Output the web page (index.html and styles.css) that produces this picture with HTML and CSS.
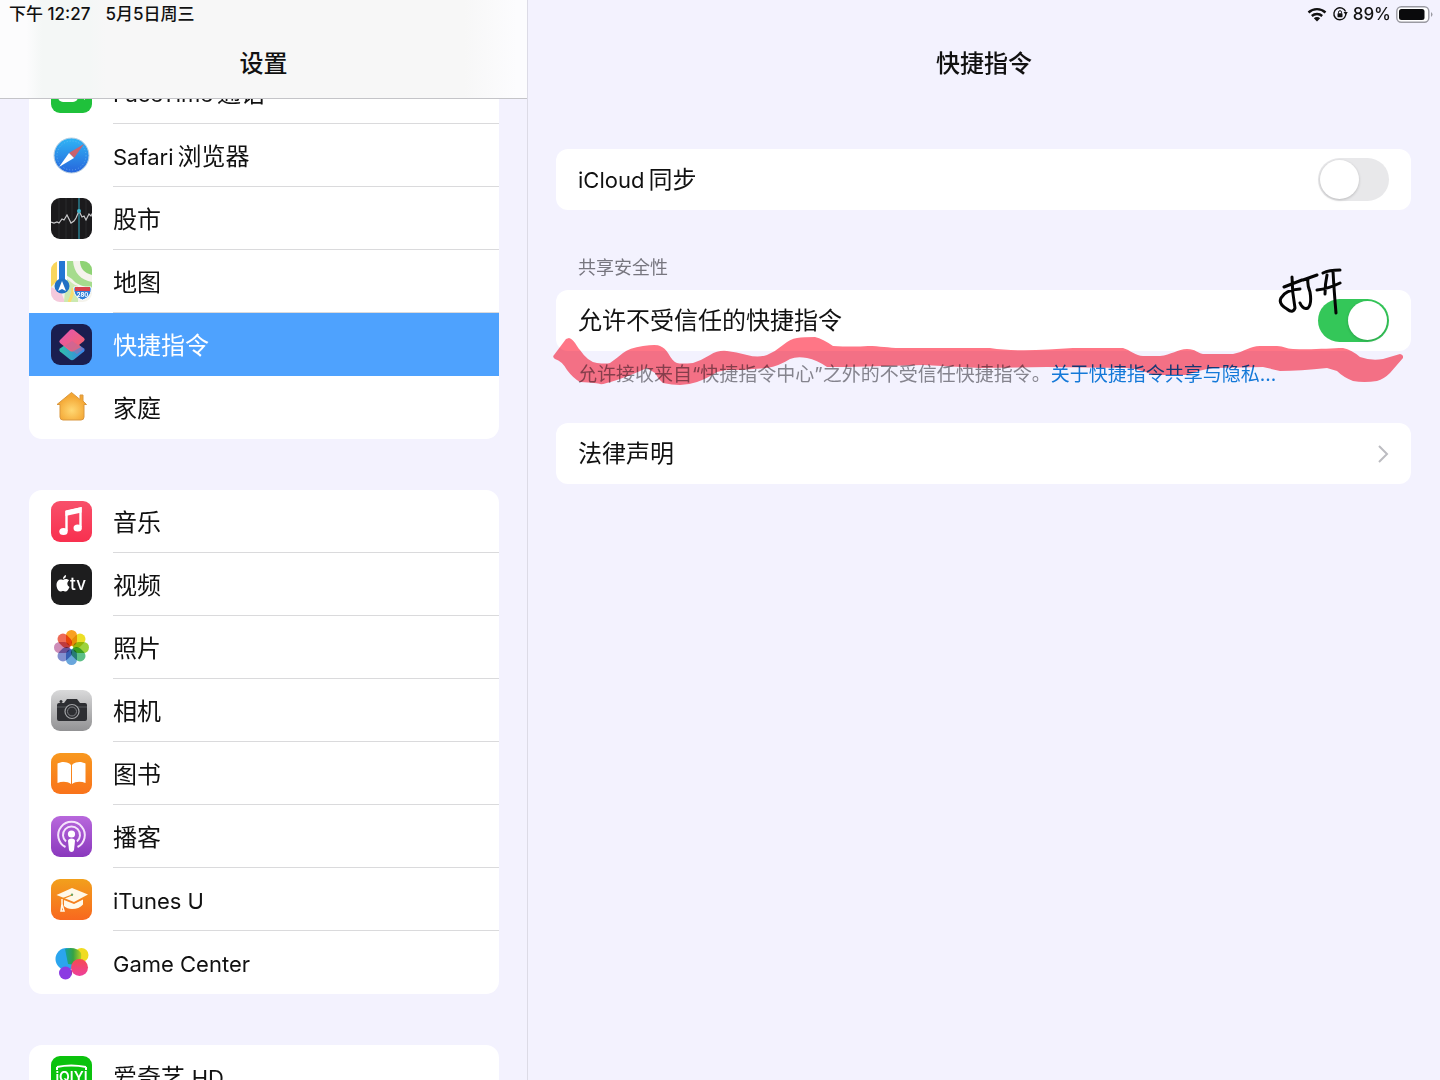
FILE: index.html
```html
<!DOCTYPE html>
<html lang="zh-CN">
<head>
    <meta charset="UTF-8">
    <meta name="viewport" content="width=device-width, initial-scale=1.0">
    <title>设置</title>
    <link rel="stylesheet" href="styles.css">
</head>
<body>

    <div class="app">
        <aside class="sidebar">
            <header class="sidebar-header">
                <div class="status">
                    <span>下午 12:27</span>
                    <span>5月5日周三</span>
                </div>
                <h1>设置</h1>
            </header>

            <nav class="menu">
                <div class="menu-group">
                    <a class="item" href="#facetime">
                        <svg class="icon" viewBox="0 0 41 41">
                            <rect width="41" height="41" rx="9" fill="#1fc13b"/>
                            <rect x="7" y="11" width="20" height="19" rx="5" fill="#fff"/>
                            <path d="M28 18l6-5v15l-6-5z" fill="#fff"/>
                        </svg>
                        <span class="name"><span class="latin">FaceTime</span>通话</span>
                    </a>
                    <a class="item" href="#safari">
                        <svg class="icon" viewBox="0 0 41 41">
                            <defs>
                                <linearGradient id="safari" x2="0" y2="1"><stop stop-color="#2fb5f5"/><stop offset="1" stop-color="#2765dc"/></linearGradient>
                            </defs>
                            <circle cx="20.500" cy="20.500" r="17.500" fill="url(#safari)" stroke="#b9cfe2"/>
                            <circle cx="20.500" cy="20.500" r="14.500" fill="none" stroke="#7fc4f5" stroke-width="1" stroke-dasharray="1 2" opacity=".6"/>
                            <path d="M33 9L18 18l5 5z" fill="#c9626f"/>
                            <path d="M8 32l10-14 5 5z" fill="#fff"/>
                        </svg>
                        <span class="name"><span class="latin">Safari</span>浏览器</span>
                    </a>
                    <a class="item" href="#stocks">
                        <svg class="icon" viewBox="0 0 41 41">
                            <rect width="41" height="41" rx="9" fill="#1b1a1c"/>
                            <path d="M8 1v39M15 0v41M21 0v41M35 1v39" stroke="#2b2a2d"/>
                            <path d="M28 0v41" stroke="#2b7c8c" stroke-width="1.500"/>
                            <path d="M0 24l3 1 3-1 2 1 3-4 2 1 3-5 4 8 3-2 2-3 3-7 3 6 2-1 2 4 3-6 2 2 2-4" fill="none" stroke="#c9c9cb" stroke-width="1.200"/>
                            <circle cx="28" cy="13" r="2" fill="#3fb6cf"/>
                        </svg>
                        <span class="name">股市</span>
                    </a>
                    <a class="item" href="#maps">
                        <svg class="icon" viewBox="0 0 41 41">
                            <defs><clipPath id="tile"><rect width="41" height="41" rx="9"/></clipPath></defs>
                            <g clip-path="url(#tile)">
                                <rect width="41" height="41" fill="#f5f3ec"/>
                                <path d="M0 0h6v20L0 26z" fill="#f9d65c"/>
                                <path d="M0 26l10 5 4 10H0z" fill="#f5c9dc"/>
                                <path d="M15 0h7c1 12 8 19 19 21v6c-9-1-16-4-20-9l-6-4z" fill="#a6dc8d"/>
                                <path d="M15 17c5 4 8 7 12 8v16H13z" fill="#cbe9b1"/>
                                <path d="M29 0h12v14C33 12 29 7 29 0z" fill="#8fd375"/>
                                <path d="M18 41c3-6 4-9 4-14" stroke="#f8dc70" stroke-width="3" fill="none"/>
                                <path d="M11 0v20" stroke="#fff" stroke-width="10"/>
                                <path d="M11 0v20" stroke="#2477d4" stroke-width="6"/>
                                <circle cx="11" cy="25" r="7.500" fill="#2171c4"/>
                                <path d="M11 20l4 10-4-2-4 2z" fill="#fff"/>
                                <path d="M23 26h17c1 6-2 11-8.500 13C25 37 22 32 23 26z" fill="#2f7ed8" stroke="#fff"/>
                                <path d="M24 26h15v4H24z" fill="#d8424d"/>
                                <text x="31.500" y="36" class="shield">280</text>
                            </g>
                        </svg>
                        <span class="name">地图</span>
                    </a>
                    <a class="item active" href="#shortcuts" aria-current="page">
                        <svg class="icon" viewBox="0 0 41 41">
                            <defs>
                                <linearGradient id="layer-top" x2="1" y2="1"><stop stop-color="#e553b8"/><stop offset="1" stop-color="#f4685f"/></linearGradient>
                                <linearGradient id="layer-bottom" x2="1" y2="0"><stop stop-color="#2fc2a8"/><stop offset="1" stop-color="#3a82ea"/></linearGradient>
                            </defs>
                            <rect width="41" height="41" rx="9" fill="#1a1e4f"/>
                            <path d="M19 17.500q2-1 4 0l10 7q1.500 1.500 0 3l-10 8q-2 1.500-4 0l-10-8q-1.500-1.500 0-3z" fill="url(#layer-bottom)"/>
                            <path d="M19 6q2-1.500 4 0l10 8q1.500 1.500 0 3l-5 4 2 2-7 4q-2 1-4 0l-10-8q-1.500-1.500 0-3z" fill="url(#layer-top)"/>
                            <path d="M14 22l7-5 12 8-7 5z" fill="#b56b9f" opacity=".5"/>
                        </svg>
                        <span class="name">快捷指令</span>
                    </a>
                    <a class="item" href="#home">
                        <svg class="icon" viewBox="0 0 41 41">
                            <defs>
                                <radialGradient id="home" cy=".65"><stop stop-color="#ffd873"/><stop offset="1" stop-color="#f4a734"/></radialGradient>
                            </defs>
                            <path d="M20.500 5.500L6 17.500h3V30q0 3 3 3h18q3 0 3-3V17.500h2.500L32 14V8h-3v4.500z" fill="url(#home)" stroke="#d99840" stroke-linejoin="round"/>
                        </svg>
                        <span class="name">家庭</span>
                    </a>
                </div>

                <div class="menu-group">
                    <a class="item" href="#music">
                        <svg class="icon" viewBox="0 0 41 41">
                            <defs>
                                <linearGradient id="music" x2="0" y2="1"><stop stop-color="#f8506a"/><stop offset="1" stop-color="#f8304f"/></linearGradient>
                            </defs>
                            <rect width="41" height="41" rx="9" fill="url(#music)"/>
                            <path d="M15.500 30V11l14-3.500V26" fill="none" stroke="#fff" stroke-width="2.400"/>
                            <path d="M14.500 9.500L30.600 6v5.500L14.500 15z" fill="#fff"/>
                            <ellipse cx="12.500" cy="30.500" rx="4.200" ry="3.500" fill="#fff"/>
                            <ellipse cx="26.700" cy="27" rx="4.200" ry="3.500" fill="#fff"/>
                        </svg>
                        <span class="name">音乐</span>
                    </a>
                    <a class="item" href="#tv">
                        <svg class="icon" viewBox="0 0 41 41">
                            <rect width="41" height="41" rx="9" fill="#1d1d1e"/>
                            <path d="M12 16c1.500-1.500 5-1.500 6 .5-2.500 2-2 5 .5 6.500-1 2.500-2.500 4.500-4 4.500-1 0-1.500-.5-2.500-.5s-1.500.5-2.500.5c-2 0-4-3.500-4-6.500 0-4.500 3.500-6.500 6.500-5z" fill="#fff"/>
                            <path d="M12 15c0-2 1.200-3.500 3-4 .2 2-1 3.800-3 4z" fill="#fff"/>
                            <text x="19" y="26" class="tv">tv</text>
                        </svg>
                        <span class="name">视频</span>
                    </a>
                    <a class="item" href="#photos">
                        <svg class="icon" viewBox="0 0 41 41">
                            <g class="petals">
                                <rect x="15" y="3" width="11" height="16" rx="5.500" fill="#f9a11f"/>
                                <rect x="15" y="3" width="11" height="16" rx="5.500" fill="#ecdf26" transform="rotate(45 20.500 20.500)"/>
                                <rect x="15" y="3" width="11" height="16" rx="5.500" fill="#9dd33c" transform="rotate(90 20.500 20.500)"/>
                                <rect x="15" y="3" width="11" height="16" rx="5.500" fill="#5cbf87" transform="rotate(135 20.500 20.500)"/>
                                <rect x="15" y="3" width="11" height="16" rx="5.500" fill="#69a6dc" transform="rotate(180 20.500 20.500)"/>
                                <rect x="15" y="3" width="11" height="16" rx="5.500" fill="#8290d0" transform="rotate(225 20.500 20.500)"/>
                                <rect x="15" y="3" width="11" height="16" rx="5.500" fill="#cd8db8" transform="rotate(270 20.500 20.500)"/>
                                <rect x="15" y="3" width="11" height="16" rx="5.500" fill="#ee6a56" transform="rotate(315 20.500 20.500)"/>
                            </g>
                        </svg>
                        <span class="name">照片</span>
                    </a>
                    <a class="item" href="#camera">
                        <svg class="icon" viewBox="0 0 41 41">
                            <defs>
                                <linearGradient id="camera" x2="0" y2="1"><stop stop-color="#d9d9da"/><stop offset="1" stop-color="#929294"/></linearGradient>
                            </defs>
                            <rect width="41" height="41" rx="9" fill="url(#camera)"/>
                            <path d="M8 13h5l3-4h10l3 4h5q2 0 2 2v14q0 2-2 2H8q-2 0-2-2V15q0-2 2-2z" fill="#2d2e32"/>
                            <path d="M6 17h30" stroke="#57585c"/>
                            <circle cx="21" cy="21.500" r="7" fill="#2d2e32" stroke="#a4a5a8" stroke-width="1.200"/>
                            <circle cx="21" cy="21.500" r="4.500" fill="none" stroke="#808186"/>
                            <circle cx="10" cy="11.500" r="1.500" fill="#2d2e32"/>
                        </svg>
                        <span class="name">相机</span>
                    </a>
                    <a class="item" href="#books">
                        <svg class="icon" viewBox="0 0 41 41">
                            <defs>
                                <linearGradient id="books" x2="0" y2="1"><stop stop-color="#f8981f"/><stop offset="1" stop-color="#f9731b"/></linearGradient>
                            </defs>
                            <rect width="41" height="41" rx="9" fill="url(#books)"/>
                            <path d="M20 12c-3-3.500-9-4-13.500-1.500V30c4.500-2 10-1.800 13.500 1z" fill="#fff"/>
                            <path d="M21 12c3-3.500 9-4 13.500-1.500V30c-4.500-2-10-1.800-13.500 1z" fill="#fff"/>
                        </svg>
                        <span class="name">图书</span>
                    </a>
                    <a class="item" href="#podcasts">
                        <svg class="icon" viewBox="0 0 41 41">
                            <defs>
                                <linearGradient id="podcasts" x2="0" y2="1"><stop stop-color="#b868dc"/><stop offset="1" stop-color="#8a38bd"/></linearGradient>
                            </defs>
                            <rect width="41" height="41" rx="9" fill="url(#podcasts)"/>
                            <g fill="none" stroke="#f5e3fb" stroke-width="2">
                                <path d="M14.500 31a13.300 13.300 0 1 1 12 0"/>
                                <path d="M15 25.500a8.500 8.500 0 1 1 11 0"/>
                            </g>
                            <circle cx="20.500" cy="18" r="3.600" fill="#fff"/>
                            <path d="M17 25q0-2.500 3.500-2.500T24 25l-1 9q-.5 2-2.500 2T18 34z" fill="#fff"/>
                        </svg>
                        <span class="name">播客</span>
                    </a>
                    <a class="item" href="#itunes-u">
                        <svg class="icon" viewBox="0 0 41 41">
                            <defs>
                                <linearGradient id="itunes" x2="0" y2="1"><stop stop-color="#f2a01c"/><stop offset="1" stop-color="#f8681f"/></linearGradient>
                            </defs>
                            <rect width="41" height="41" rx="9" fill="url(#itunes)"/>
                            <path d="M21 9l16 6.500-14 7.500L5.500 16z" fill="#fff8e8"/>
                            <path d="M13 21l10 4 9-4.500v5q-4 4.500-11 4.500-5 0-8-3z" fill="#fff8e8"/>
                            <path d="M21 16l-10 4v6" fill="none" stroke="#f08a1e" stroke-width="1.200"/>
                            <path d="M11 20v5l2 7h-3l1-7" fill="none" stroke="#fff8e8" stroke-width="1.500"/>
                            <circle cx="21" cy="15.800" r="1.200" fill="#6ca35e"/>
                        </svg>
                        <span class="name"><span class="latin">iTunes U</span></span>
                    </a>
                    <a class="item" href="#game-center">
                        <svg class="icon" viewBox="0 0 41 41">
                            <defs>
                                <linearGradient id="ball-green" x2="1" y2="0"><stop stop-color="#14a0a0"/><stop offset=".5" stop-color="#35a344"/><stop offset="1" stop-color="#b5cf20"/></linearGradient>
                                <linearGradient id="ball-red" x2="0" y2="1"><stop stop-color="#f64b50"/><stop offset="1" stop-color="#ee3f9c"/></linearGradient>
                            </defs>
                            <circle cx="30.500" cy="13" r="7" fill="#f0dc22"/>
                            <circle cx="15.500" cy="17" r="11" fill="#2ba5ee"/>
                            <path d="M14 7c6-2 13-1 16 4 1 5-1 10-5 12l-8-1z" fill="url(#ball-green)"/>
                            <circle cx="28.500" cy="25.500" r="8.500" fill="url(#ball-red)"/>
                            <circle cx="14.500" cy="31" r="6.500" fill="#8b3be2"/>
                            <path d="M20 27.500a6.500 6.500 0 0 1 1 6 8 8 0 0 1-1-6z" fill="#a32cae"/>
                        </svg>
                        <span class="name"><span class="latin">Game Center</span></span>
                    </a>
                </div>

                <div class="menu-group">
                    <a class="item" href="#iqiyi">
                        <svg class="icon" viewBox="0 0 41 41">
                            <rect width="41" height="41" rx="9" fill="#0bc20d"/>
                            <path d="M6 11q14-3 29 0M6 31q14 4 29 0M6 11v3M35 11v3" fill="none" stroke="#fff" stroke-width="2"/>
                            <text x="20.500" y="26" class="iqiyi">iQIYI</text>
                        </svg>
                        <span class="name">爱奇艺 <span class="latin">HD</span></span>
                    </a>
                </div>
            </nav>
        </aside>

        <main class="content">
            <header class="content-header">
                <div class="status status-right">
                    <svg class="wifi" viewBox="0 0 20 15" fill="none" stroke="#111">
                        <path d="M1.500 5.500a12.500 12.500 0 0 1 17 0M4.800 9a7.800 7.800 0 0 1 10.400 0" stroke-width="2.400"/>
                        <path d="M10 14.500l-3.200-3.300a4.600 4.600 0 0 1 6.400 0z" fill="#111" stroke="none"/>
                    </svg>
                    <svg class="lock" viewBox="0 0 16 16" fill="none" stroke="#111">
                        <path d="M10 2.200a6 6 0 1 0 3.800 4.500M10 2.200q2.600 1 3.600 3.300" stroke-width="1.400"/>
                        <path d="M11.500 6h4.300l-2 3z" fill="#111" stroke="none"/>
                        <rect x="5.500" y="7.300" width="5" height="3.900" rx=".6" fill="#111" stroke="none"/>
                        <path d="M6.500 7.500V6.200a1.500 1.500 0 0 1 3 0v1.300"/>
                    </svg>
                    <span>89%</span>
                    <svg class="battery" viewBox="0 0 37 17">
                        <rect x=".8" y=".8" width="32" height="15.400" rx="4.500" fill="#fff" stroke="#9a9aa2" stroke-width="1.400"/>
                        <rect x="3" y="3" width="25.500" height="11" rx="2.500" fill="#0a0a0c"/>
                        <path d="M35 6q3 2.500 0 5z" fill="#9a9aa2"/>
                    </svg>
                </div>
                <h1>快捷指令</h1>
            </header>

            <section class="card">
                <label for="icloud"><span class="latin">iCloud</span>同步</label>
                <input class="toggle" type="checkbox" id="icloud">
            </section>

            <section class="sharing">
                <h2>共享安全性</h2>
                <div class="card">
                    <label for="untrusted">允许不受信任的快捷指令</label>
                    <input class="toggle" type="checkbox" id="untrusted" checked>
                </div>
                <p class="note">允许接收来自“快捷指令中心”之外的不受信任快捷指令。<a href="#privacy">关于快捷指令共享与隐私...</a></p>

                <!-- marker stroke under the row -->
                <svg class="marker" viewBox="553 337 850 48" preserveAspectRatio="none">
                    <path d="M569 338C574 339 577 347 580 350Q588 362 597 363T610 363Q617 358 623 353T643 346T660 346Q665 348 668 353Q673 362 677 363T693 363Q702 360 710 355T727 351T747 355T767 355Q776 351 783 345T797 338T815 337Q823 339 833 346Q853 347 868 346C880 346 888 348 900 348H990C1015 352 1045 350 1073 348H1123C1130 350 1136 356 1143 356H1160C1171 355 1178 349 1187 349S1197 353 1203 354H1233C1244 352 1250 346 1260 346H1277C1284 346 1286 349 1293 349C1315 350 1330 348 1343 348Q1352 350 1360 357Q1371 361 1383 359L1400 354Q1404 355 1403 358L1390 373Q1384 379 1377 381Q1364 383 1353 381Q1343 377 1337 371L1327 368Q1300 371 1280 371L1263 367L1213 368Q1199 370 1187 375H1153Q1140 369 1127 368L1047 367L980 368L923 365L847 367L827 367Q817 360 807 358T790 359Q779 366 767 368L740 370Q727 369 717 372Q706 379 697 382T680 385T663 383Q658 379 655 373L647 368Q632 375 617 380T600 384T580 382Q573 378 567 370Q562 361 555 359Q552 357 554 355L566 339Z"/>
                </svg>
                <!-- handwritten 打开 next to the switch -->
                <svg class="handwriting" viewBox="1278 267 66 50">
                    <path d="M1284 287L1302 280M1292 277Q1292 292 1295 308Q1293 314 1287 309Q1278 304 1281 298Q1285 290 1300 289M1303 280L1317 275M1308 279Q1307 284 1310 292Q1312 304 1308 308Q1303 310 1300 303M1323 273Q1329 270 1340 270M1317 290Q1328 289 1340 283M1327 275Q1325 284 1325 294M1333 271Q1334 290 1336 313"/>
                </svg>
            </section>

            <a class="card" href="#legal">
                <span>法律声明</span>
                <svg class="chevron" viewBox="0 0 12 18"><path d="M2 1l8 8-8 8"/></svg>
            </a>
        </main>
    </div>

</body>
</html>
```
FILE: styles.css
```css
* { box-sizing: border-box; }
body { font-family: Inter, "Noto Sans CJK SC", sans-serif; font-size: 24px; line-height: 32px; color: #111; background-color: #f3f2fe; margin: 0; }
a { color: inherit; text-decoration: none; }
h1 { font-size: 24px; line-height: 32px; font-weight: 500; text-align: center; margin: 0; padding-top: 20px; }
.app { display: grid; grid-template-columns: 11fr 19fr; height: 100vh; overflow: hidden; }
.latin { font-size: 22px; margin-right: 4px; }

/* status bar */
.status { display: flex; gap: 15px; height: 28px; padding: 0 9px; font-size: 17px; line-height: 28px; font-weight: 500; }
.status-right { justify-content: flex-end; align-items: center; gap: 5px; padding: 0 7px 0 0; }
.wifi { width: 20px; height: 15px; }
.lock { width: 16px; height: 16px; }
.battery { width: 37px; height: 17px; }

/* left column */
.sidebar { min-width: 0; height: 100vh; overflow: hidden; border-right: 1px solid #dcdbe6; }
.sidebar-header { position: relative; z-index: 1; height: 99px; border-bottom: 1px solid #c4c4c8; background: linear-gradient(90deg, #fcfcfd 5%, #f4f7f6 8%, #f4f7f6 17%, #f7f7f7 20%, #f7f7f7 88%, #fcfcfe 98%); }
.menu { display: flex; flex-direction: column; gap: 51px; margin-top: -38px; padding: 0 28px 0 29px; }
.menu-group { background-color: #fff; border-radius: 13px; overflow: hidden; }
.item { display: flex; align-items: center; gap: 21px; height: 63px; padding-left: 22px; }
.icon { flex: none; width: 41px; height: 41px; }
.name { flex: 1; height: 63px; line-height: 65px; border-bottom: 1px solid #dadadc; }
.item:last-child .name { border-bottom: 0; }
.active { background-color: #4ea2fe; color: #fff; }
.active .name { border-bottom: 0; }
.petals rect { mix-blend-mode: multiply; }
.shield { font-size: 6px; font-weight: 700; fill: #fff; text-anchor: middle; }
.tv { font-size: 17px; font-weight: 500; fill: #fff; }
.iqiyi { font-size: 14px; font-weight: 600; fill: #fff; text-anchor: middle; }

/* right column */
.content { min-width: 0; padding-left: 28px; padding-right: 29px; }
.content-header { height: 149px; margin-left: -28px; margin-right: -29px; }
.card { display: flex; align-items: center; justify-content: space-between; height: 61px; padding: 0 22px; background-color: #fff; border-radius: 12px; }
.toggle { appearance: none; width: 71px; height: 43px; margin: 0; padding: 2px; border-radius: 22px; background-color: #e8e8ea; display: flex; }
.toggle::before { content: ""; width: 39px; height: 39px; border-radius: 50%; background-color: #fff; box-shadow: 0 1px 3px rgba(0, 0, 0, 0.2); }
.toggle:checked { background-color: #34c759; justify-content: flex-end; }
.sharing { position: relative; margin: 42px 0 32px; }
.sharing h2 { margin: 0; padding: 0 22px 6px; font-size: 18px; line-height: 32px; font-weight: 400; color: #77767f; }
.note { margin: 0; padding: 8px 22px 0; font-size: 19px; line-height: 32px; color: #85848e; white-space: nowrap; }
.note a { color: #1479d8; }
.chevron { width: 12px; height: 18px; fill: none; stroke: #bcbcc1; stroke-width: 2; }

/* notes drawn over the page */
.marker { position: absolute; left: -3px; top: 85px; width: calc(100% - 5px); height: 48px; fill: #ff7686; mix-blend-mode: multiply; pointer-events: none; }
.handwriting { position: absolute; right: 67px; top: 15px; width: 66px; height: 50px; fill: none; stroke: #050505; stroke-width: 3; stroke-linecap: round; stroke-linejoin: round; pointer-events: none; }
```
